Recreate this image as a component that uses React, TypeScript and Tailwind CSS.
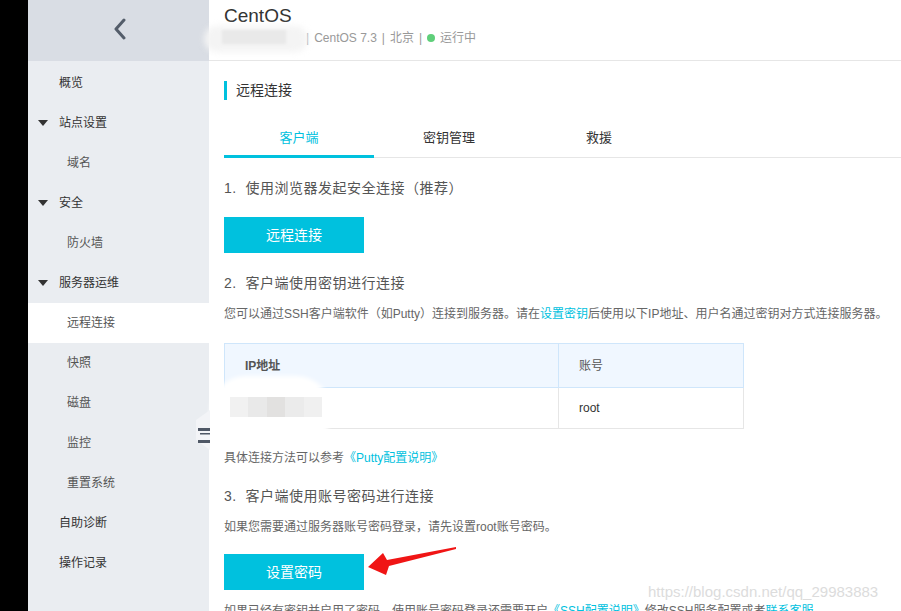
import React from 'react'

const font = "font-['Liberation_Sans','Noto_Sans_CJK_SC',sans-serif]"

type NavItem = { label: string; level: 1 | 2; caret?: boolean; active?: boolean }

const nav: NavItem[] = [
  { label: '概览', level: 1 },
  { label: '站点设置', level: 1, caret: true },
  { label: '域名', level: 2 },
  { label: '安全', level: 1, caret: true },
  { label: '防火墙', level: 2 },
  { label: '服务器运维', level: 1, caret: true },
  { label: '远程连接', level: 2, active: true },
  { label: '快照', level: 2 },
  { label: '磁盘', level: 2 },
  { label: '监控', level: 2 },
  { label: '重置系统', level: 2 },
  { label: '自助诊断', level: 1 },
  { label: '操作记录', level: 1 },
]

function Sidebar() {
  return (
    <aside className="w-[181px] shrink-0 bg-[#eaedf1] flex flex-col">
      <div className="h-[61px] shrink-0 bg-[#d9dde4] flex items-center justify-center">
        <svg width="16" height="22" viewBox="0 0 16 22" className="ml-[2px] -mt-[4px]">
          <path d="M12 2 L4 11 L12 20" fill="none" stroke="#545d6a" strokeWidth="3" strokeLinecap="round" strokeLinejoin="round" />
        </svg>
      </div>
      <nav className="flex flex-col pt-[2px]">
        {nav.map((item) => (
          <div
            key={item.label}
            className={`h-[40px] shrink-0 flex items-center text-[12px] leading-[18px] ${item.active ? 'bg-white' : ''} ${item.level === 1 ? 'pl-[31px] text-[#333]' : 'pl-[39px] text-[#555]'}`}
          >
            {item.caret ? (
              <svg width="10" height="6" viewBox="0 0 10 6" className="-ml-[21px] mr-[11px]">
                <path d="M0 0 L10 0 L5 6 Z" fill="#333" />
              </svg>
            ) : null}
            <span>{item.label}</span>
          </div>
        ))}
      </nav>
    </aside>
  )
}

function Tabs() {
  const tabs = ['客户端', '密钥管理', '救援']
  return (
    <div className="mt-[19px] -mr-[15px] flex border-b border-[#e6e6e6]">
      {tabs.map((t, i) => (
        <div
          key={t}
          className={`relative w-[150px] h-[38px] flex items-center justify-center text-[13px] ${i === 0 ? 'text-[#00c1de]' : 'text-[#333]'}`}
        >
          {t}
          {i === 0 ? <div className="absolute left-0 right-0 -bottom-[1px] h-[3px] bg-[#00c1de]" /> : null}
        </div>
      ))}
    </div>
  )
}

function Heading({ children, className = '' }: { children: React.ReactNode; className?: string }) {
  return <div className={`text-[14px] leading-[20px] text-[#555] tracking-[0.5px] ${className}`}>{children}</div>
}

function Button({ children, className = '' }: { children: React.ReactNode; className?: string }) {
  return (
    <div className={`w-[140px] h-[36px] bg-[#00c1de] text-white text-[14px] flex items-center justify-center ${className}`}>
      {children}
    </div>
  )
}

export default function App() {
  return (
    <div className={`relative w-[901px] h-[611px] overflow-hidden flex bg-white ${font}`}>
      <div className="w-[28px] shrink-0 bg-black" />
      <Sidebar />

      <main className="flex-1 min-w-0">
        {/* header */}
        <div className="h-[61px] border-b border-[#e6e6e6] px-[15px] pt-[4px]">
          <div className="text-[19px] leading-[24px] text-[#333]">CentOS</div>
          <div className="mt-[1px] text-[12px] leading-[18px] text-[#999] flex items-center pl-[82px] gap-[5px]">
            <span>|</span>
            <span>CentOS 7.3</span>
            <span>|</span>
            <span>北京</span>
            <span>|</span>
            <span className="w-[8px] h-[8px] rounded-full bg-[#5fcf7a]" />
            <span>运行中</span>
          </div>
        </div>

        <div className="px-[15px]">
          <div className="mt-[19px] flex items-center h-[20px]">
            <div className="w-[3px] h-[19px] bg-[#00c1de]" />
            <span className="ml-[9px] text-[14px] text-[#333]">远程连接</span>
          </div>

          <Tabs />

          <Heading className="mt-[20px]">1.&nbsp; 使用浏览器发起安全连接（推荐）</Heading>
          <Button className="mt-[19px]">远程连接</Button>

          <Heading className="mt-[20px]">2.&nbsp; 客户端使用密钥进行连接</Heading>
          <p className="mt-[12px] text-[12px] leading-[18px] text-[#666] whitespace-nowrap">
            您可以通过SSH客户端软件（如Putty）连接到服务器。请在<span className="text-[#00c1de]">设置密钥</span>后使用以下IP地址、用户名通过密钥对方式连接服务器。
          </p>

          <table className="mt-[20px] w-[520px] border-collapse text-[12px] text-[#555]">
            <thead>
              <tr className="bg-[#f0f7ff] h-[44px]">
                <th className="w-[334px] border border-[#cfe6fb] text-left pl-[20px] font-bold text-[#555]">IP地址</th>
                <th className="border border-[#cfe6fb] text-left pl-[20px] font-normal">账号</th>
              </tr>
            </thead>
            <tbody>
              <tr className="h-[41px]">
                <td className="border border-[#e6e6e6]" />
                <td className="border border-[#e6e6e6] pl-[20px] text-[#333]">root</td>
              </tr>
            </tbody>
          </table>

          <p className="mt-[20px] text-[12px] leading-[18px] text-[#666]">
            具体连接方法可以参考<span className="text-[#00c1de]">《Putty配置说明》</span>
          </p>

          <Heading className="mt-[19px]">3.&nbsp; 客户端使用账号密码进行连接</Heading>
          <p className="mt-[12px] text-[12px] leading-[18px] text-[#666]">如果您需要通过服务器账号密码登录，请先设置root账号密码。</p>
          <Button className="mt-[18px]">设置密码</Button>

          <p className="mt-[12px] text-[12px] leading-[18px] text-[#666] whitespace-nowrap">
            如果已经有密钥并启用了密码，使用账号密码登录还需要开启<span className="text-[#00c1de]">《SSH配置说明》</span>修改SSH服务配置或者<span className="text-[#00c1de]">联系客服</span>
          </p>
        </div>
      </main>

      {/* redaction blobs */}
      <div className="absolute left-[204px] top-[26px] w-[104px] h-[26px] rounded-full bg-[#f4f4f4] blur-[3px]" />
      <div className="absolute left-[222px] top-[30px] w-[64px] h-[14px] bg-[#e9e9e9] blur-[1px]" />
      <div className="absolute left-[210px] top-[376px] w-[122px] h-[72px] rounded-[40px] bg-white blur-[2px]" />
      <div className="absolute left-[230px] top-[397px] w-[92px] h-[20px] flex">
        <div className="flex-1 bg-[#f1f1f1]" />
        <div className="flex-1 bg-[#e9e9e9]" />
        <div className="flex-1 bg-[#e2e1e0]" />
        <div className="flex-1 bg-[#ebebeb]" />
        <div className="flex-1 bg-[#f0f0f0]" />
      </div>

      {/* collapse handle */}
      <svg className="absolute left-[194px] top-[410px]" width="16" height="40" viewBox="0 0 16 40">
        <path d="M16 0 L16 40 L2 30 L2 10 Z" fill="#f3f4f7" />
        <rect x="4" y="18" width="12" height="3" fill="#4f5866" />
        <rect x="6" y="23" width="10" height="1.5" fill="#4f5866" />
        <rect x="4" y="30" width="12" height="3" fill="#4f5866" />
      </svg>

      {/* red arrow */}
      <svg className="absolute left-0 top-0 pointer-events-none" width="901" height="611">
        <polygon points="368,567 383,553 387,560 456,547 456,549 389,566 386,575" fill="#f01515" />
      </svg>

      {/* watermark */}
      <div className="absolute left-[648px] top-[584px] text-[15px] leading-[16px] text-[#dcdcdc] font-['Liberation_Sans',sans-serif]">
        https://blog.csdn.net/qq_29983883
      </div>
    </div>
  )
}
